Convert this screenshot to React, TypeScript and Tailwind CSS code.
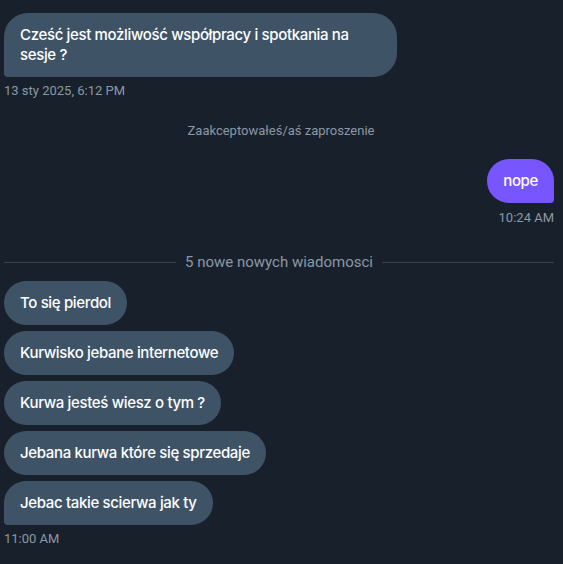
const font = { fontFamily: "Roboto, 'Noto Sans', sans-serif" };

type Msg = { text: string; last?: boolean };

const burst: Msg[] = [
  { text: "To się pierdol" },
  { text: "Kurwisko jebane internetowe" },
  { text: "Kurwa jesteś wiesz o tym ?" },
  { text: "Jebana kurwa które się sprzedaje" },
  { text: "Jebac takie scierwa jak ty", last: true },
];

const bubbleFont = "font-['Inter',sans-serif] font-medium tracking-[-0.35px] text-[15px] leading-5";

const Incoming = ({ msg, className = "" }: { msg: Msg; className?: string }) => (
  <div
    className={
      "self-start max-w-[393px] bg-[#3e5466] text-white px-4 py-3 rounded-3xl " +
      bubbleFont +
      " " +
      (msg.last ? "rounded-bl-[4px] " : "") +
      className
    }
  >
    {msg.text}
  </div>
);

export default function App() {
  return (
    <div className="min-h-[564px] w-full bg-[#18212b] antialiased" style={font}>
      <div className="flex flex-col pl-1 pr-[9px] pt-[13px] pb-4">
        <Incoming msg={{ text: "Cześć jest możliwość współpracy i spotkania na sesje ?", last: true }} />
        <div className="mt-[6px] text-[13px] leading-4 text-[#8b98a5]">13 sty 2025, 6:12 PM</div>

        <div className="mt-6 text-center text-[13px] leading-4 text-[#8b98a5] pl-1">
          Zaakceptowałeś/aś zaproszenie
        </div>

        <div
          className={
            "mt-5 self-end bg-[#7856ff] text-white px-4 py-3 rounded-3xl rounded-br-[4px] " + bubbleFont
          }
        >
          nope
        </div>
        <div className="mt-[7px] self-end text-[13px] leading-4 text-[#8b98a5]">10:24 AM</div>

        <div className="mt-[26px] flex items-center gap-[9px]">
          <div className="h-px flex-1 bg-[#38444d]" />
          <div className="text-[15px] leading-5 text-[#8b98a5]">5 nowe nowych wiadomosci</div>
          <div className="h-px flex-1 bg-[#38444d]" />
        </div>

        <div className="mt-[9px] flex flex-col gap-[6px]">
          {burst.map((m) => (
            <Incoming key={m.text} msg={m} />
          ))}
        </div>
        <div className="mt-[6px] text-[13px] leading-4 text-[#8b98a5]">11:00 AM</div>
      </div>
    </div>
  );
}
